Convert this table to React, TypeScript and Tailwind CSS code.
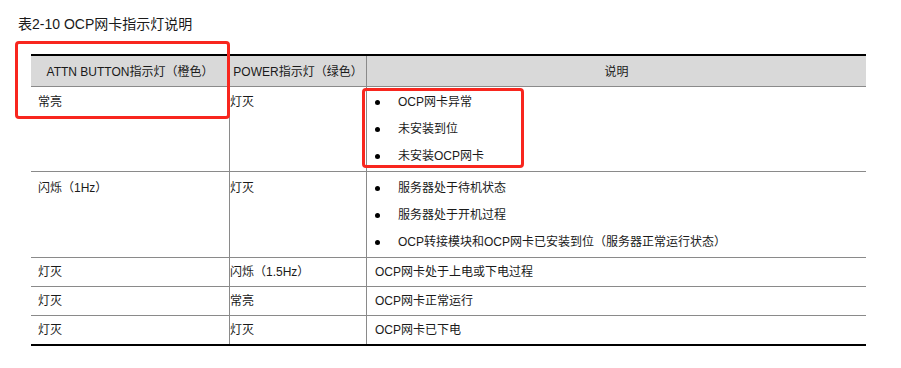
import React from "react";

type Row = {
  attn: string;
  power: string;
  desc: string | string[];
  list?: "first" | "second";
};

const rows: Row[] = [
  { attn: "常亮", power: "灯灭", desc: ["OCP网卡异常", "未安装到位", "未安装OCP网卡"], list: "first" },
  {
    attn: "闪烁（1Hz）",
    power: "灯灭",
    desc: ["服务器处于待机状态", "服务器处于开机过程", "OCP转接模块和OCP网卡已安装到位（服务器正常运行状态）"],
    list: "second",
  },
  { attn: "灯灭", power: "闪烁（1.5Hz）", desc: "OCP网卡处于上电或下电过程" },
  { attn: "灯灭", power: "常亮", desc: "OCP网卡正常运行" },
  { attn: "灯灭", power: "灯灭", desc: "OCP网卡已下电" },
];

const font = { fontFamily: '"Liberation Sans", Arial, "Noto Sans CJK SC", sans-serif' };

function Bullets({ items, top }: { items: string[]; top: "first" | "second" }) {
  return (
    <ul
      className={
        "flex flex-col gap-[9px] pl-[8px] pb-[6px] " + (top === "first" ? "pt-[6px]" : "pt-[7px]")
      }
    >
      {items.map((t) => (
        <li key={t} className="flex items-center leading-[18px]">
          <span className="w-[5px] h-[5px] rounded-full bg-black shrink-0" />
          <span className="ml-[18px] whitespace-nowrap">{t}</span>
        </li>
      ))}
    </ul>
  );
}

export default function App() {
  return (
    <div className="relative w-[901px] h-[368px] bg-white text-[#1a1a1a]" style={font}>
      <div className="pt-[14px] pl-[18px]">
        <h1 className="text-[14px] leading-[20px] font-normal">表2-10 OCP网卡指示灯说明</h1>

        <div className="ml-[13px] mt-[20px] w-[835px] text-[12px] border-t-2 border-b-2 border-black">
          {/* header */}
          <div className="grid grid-cols-[198px_137px_500px] bg-[#d9d9d9] border-b border-[#8a8a8a] h-[31px]">
            <div className="flex items-center justify-center pt-[1px]">ATTN BUTTON指示灯（橙色）</div>
            <div className="flex items-center justify-center pt-[1px] border-l border-[#8a8a8a]">
              POWER指示灯（绿色）
            </div>
            <div className="flex items-center justify-center pt-[1px] border-l border-[#8a8a8a]">说明</div>
          </div>

          {rows.map((r, i) => {
            const multi = Array.isArray(r.desc);
            const pad = multi ? (r.list === "first" ? "pt-[6px]" : "pt-[7px]") : "py-[5px]";
            return (
              <div
                key={i}
                className={
                  "grid grid-cols-[198px_137px_500px] leading-[18px] " +
                  (i < rows.length - 1 ? "border-b border-[#8a8a8a]" : "")
                }
              >
                <div className={"pl-[7px] " + pad}>{r.attn}</div>
                <div className={"border-l border-[#8a8a8a] " + pad}>{r.power}</div>
                <div className="border-l border-[#8a8a8a]">
                  {multi ? (
                    <Bullets items={r.desc as string[]} top={r.list ?? "first"} />
                  ) : (
                    <div className="pl-[8px] py-[5px]">{r.desc as string}</div>
                  )}
                </div>
              </div>
            );
          })}
        </div>
      </div>

      {/* highlight boxes */}
      <div className="absolute left-[15px] top-[41px] w-[215px] h-[78px] border-[3px] border-[#f8261e] rounded-[4px]" />
      <div className="absolute left-[362px] top-[88px] w-[162px] h-[80px] border-[3px] border-[#f8261e] rounded-[4px]" />
    </div>
  );
}
